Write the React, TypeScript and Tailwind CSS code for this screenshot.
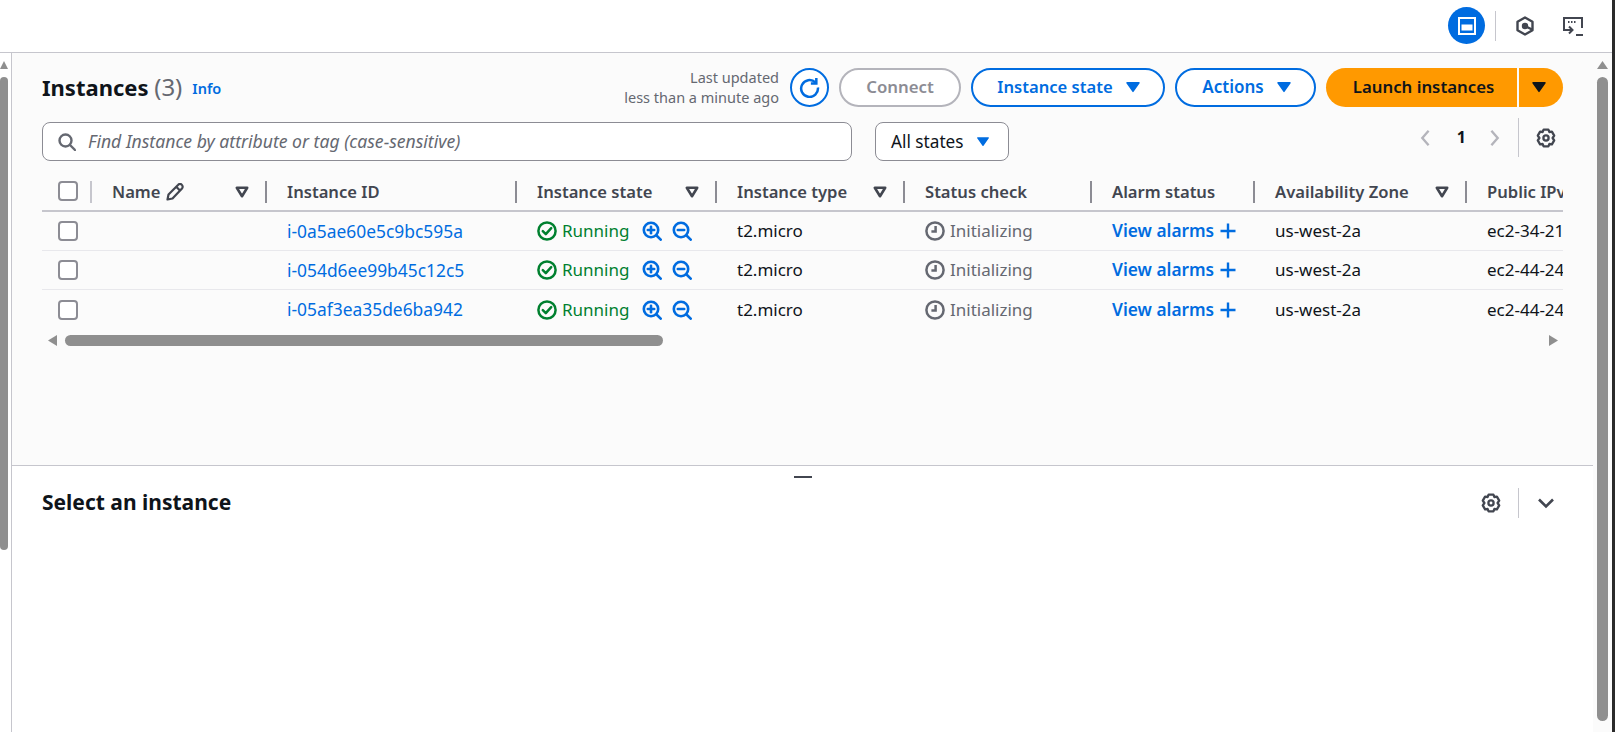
const FONT = "font-['Noto_Sans','Open_Sans',sans-serif]";

const COLS = "grid grid-cols-[50px_175px_250px_200px_188px_187px_163px_212px_200px]";

function Caret({ className }: { className?: string }) {
  return (
    <svg viewBox="0 0 16 12" className={className} fill="currentColor">
      <path d="M2 1h12a.8.8 0 0 1 .6 1.3L8.6 10.8a.8.8 0 0 1-1.2 0L1.4 2.3A.8.8 0 0 1 2 1z" />
    </svg>
  );
}

function SortIcon() {
  return (
    <svg viewBox="0 0 14 12" className="h-[12px] w-[14px] text-[#424650]" fill="none" stroke="currentColor" strokeWidth="2.6" strokeLinejoin="round">
      <path d="M1.8 1.8h10.4L7 10.2z" />
    </svg>
  );
}

function GearIcon() {
  return (
    <svg viewBox="0 0 20 20" className="size-5 text-[#424650]" fill="none" stroke="currentColor" strokeWidth="2.3" strokeLinejoin="round">
      <circle cx="10" cy="10" r="2.6" />
      <path d="M7.6 1.6h4.8l1 2.4 2.5-.4 2.3 4-1.6 2.4 1.6 2.4-2.3 4-2.5-.4-1 2.4H7.6l-1-2.4-2.5.4-2.3-4 1.6-2.4-1.6-2.4 2.3-4 2.5.4z" />
    </svg>
  );
}

function Checkbox() {
  return <span className="block size-5 rounded-[4px] border-2 border-[#8c8c94] bg-white" />;
}

function Sep({ light }: { light?: boolean }) {
  return <span className={`absolute top-0 right-0 h-[22px] w-0.5 ${light ? "bg-[#c6c6cd]" : "bg-[#8c8c94]"}`} />;
}

function HeaderCell({ label, sort, children }: { label: string; sort?: boolean; children?: React.ReactNode }) {
  return (
    <div className="relative flex h-[22px] items-center pr-[18px] pl-[20px]">
      <span className="whitespace-nowrap text-[16.6px] font-semibold text-[#424650]">{label}</span>
      {children}
      {sort && (
        <span className="ml-auto">
          <SortIcon />
        </span>
      )}
      <Sep />
    </div>
  );
}

function ZoomIcon({ plus }: { plus?: boolean }) {
  return (
    <svg viewBox="0 0 20 20" className="size-5 text-[#006ce0]" fill="none" stroke="currentColor" strokeWidth="2.6" strokeLinecap="round">
      <circle cx="9" cy="9" r="7.2" />
      <path d="M14.5 14.5l4.2 4.2" />
      <path d="M5.8 9h6.4" />
      {plus && <path d="M9 5.8v6.4" />}
    </svg>
  );
}

function Row({ id, dns }: { id: string; dns: string }) {
  return (
    <div className={`${COLS} h-[39px] items-center border-b border-[#e8e8ec] text-[17px] last:border-b-0`}>
      <div className="pl-4">
        <Checkbox />
      </div>
      <div />
      <div className="pl-[20px] text-[17.4px] text-[#006ce0]">{id}</div>
      <div className="flex items-center pl-[20px]">
        <svg viewBox="0 0 20 20" className="size-5 text-[#00802f]" fill="none" stroke="currentColor" strokeWidth="2.5">
          <circle cx="10" cy="10" r="8.6" />
          <path d="M5.8 10.2l3 3 5.4-6" strokeLinecap="round" strokeLinejoin="round" />
        </svg>
        <span className="ml-[5px] text-[#00802f]">Running</span>
        <span className="ml-[13px]">
          <ZoomIcon plus />
        </span>
        <span className="ml-[10px]">
          <ZoomIcon />
        </span>
      </div>
      <div className="pl-[20px] text-[#0f141a]">t2.micro</div>
      <div className="flex items-center pl-[20px] text-[#656871]">
        <svg viewBox="0 0 20 20" className="size-5" fill="none" stroke="currentColor" strokeWidth="2.5">
          <circle cx="10" cy="10" r="8.6" />
          <path d="M10.6 5v5.6H6.4" />
        </svg>
        <span className="ml-[5px]">Initializing</span>
      </div>
      <div className="flex items-center pl-[20px] text-[17.3px] font-semibold text-[#006ce0]">
        View alarms
        <svg viewBox="0 0 16 16" className="ml-[6px] size-4" fill="none" stroke="currentColor" strokeWidth="2.4">
          <path d="M8 0.5v15M0.5 8h15" />
        </svg>
      </div>
      <div className="pl-[20px] text-[#0f141a]">us-west-2a</div>
      <div className="pl-[20px] whitespace-nowrap text-[#0f141a]">{dns}</div>
    </div>
  );
}

function VerticalScrollbar({ width, thumbEnd }: { width: string; thumbEnd: string }) {
  return (
    <div className={`flex flex-col items-stretch pt-2 ${width}`}>
      <div className="h-2 w-full bg-[#8f8f8f] [clip-path:polygon(50%_0,100%_100%,0_100%)]" />
      <div className={`mt-[8px] w-full rounded-[6px] bg-[#8f8f8f] ${thumbEnd}`} />
    </div>
  );
}

export default function App() {
  return (
    <div className={`${FONT} relative flex h-[732px] w-[1615px] flex-col overflow-hidden bg-white`}>
      <header className="flex h-[53px] shrink-0 items-start border-b border-[#c6c6cd] pr-[32px]">
        <div className="ml-auto flex items-center pt-[7px]">
          <span className="flex size-[37px] items-center justify-center rounded-full bg-[#006ce0]">
            <svg viewBox="0 0 18 18" className="size-[18px] text-white" fill="none" stroke="currentColor">
              <rect x="1" y="1" width="16" height="16" strokeWidth="2" />
              <rect x="3.5" y="7.5" width="11" height="6" fill="currentColor" strokeWidth="0" />
            </svg>
          </span>
          <span className="ml-[10px] h-[30px] w-px bg-[#c6c6cd]" />
          <svg viewBox="0 0 20 20" className="ml-[19px] size-5 text-[#424650]" fill="none" stroke="currentColor" strokeWidth="2.4">
            <path d="M10 1.5l7.5 4.2v8.6L10 18.5l-7.5-4.2V5.7z" strokeLinejoin="round" />
            <circle cx="10" cy="10" r="2" fill="currentColor" />
            <path d="M10 10l7 3.5" />
          </svg>
          <svg viewBox="0 0 20 20" className="ml-[28px] size-5 translate-y-px text-[#424650]" fill="none" stroke="currentColor" strokeWidth="2">
            <path d="M5 13H1V1h18v10" />
            <path d="M5 5h8" strokeDasharray="1.5 1.5" />
            <path d="M0 13h9M6 9.5l3.5 3.5L6 16.5" />
            <path d="M13 18h7" />
          </svg>
        </div>
      </header>

      <div className="flex min-h-0 flex-1">
        <div className="flex w-3 shrink-0 border-r border-[#c6c6cd]">
          <VerticalScrollbar width="w-2" thumbEnd="h-[473px]" />
        </div>

        <main className="flex w-[1581px] shrink-0 flex-col">
          <section className="h-[413px] shrink-0 border-b border-[#c6c6cd] bg-[#fbfbfb] pt-[14px] pr-[30px] pl-[30px]">
            <div className="flex items-center">
              <h1 className="text-[22px] font-bold text-[#0f141a]">
                Instances <span className="text-[24px] font-normal text-[#656871]">(3)</span>
              </h1>
              <span className="ml-[10px] pt-1 text-[14.5px] font-semibold text-[#006ce0]">Info</span>
              <div className="ml-auto text-right text-[14.5px] leading-[20px] text-[#656871]">
                <div>Last updated</div>
                <div>less than a minute ago</div>
              </div>
              <span className="ml-[11px] flex size-[39px] items-center justify-center rounded-full border-2 border-[#006ce0] bg-white">
                <svg viewBox="0 0 20 20" className="size-[21px] text-[#006ce0]" fill="none" stroke="currentColor" strokeWidth="2.4">
                  <path d="M15.6 5.2A8 8 0 1 0 18 10" />
                  <path d="M16.5 1v5.2h-5.2" />
                </svg>
              </span>
              <span className="ml-[10px] flex h-[39px] w-[122px] items-center justify-center rounded-full border-2 border-[#b4b4bb] bg-white text-[16.8px] font-semibold text-[#8c8c94]">
                Connect
              </span>
              <span className="ml-[10px] flex h-[39px] w-[194px] items-center justify-center rounded-full border-2 border-[#006ce0] bg-white pl-[2px] text-[16.6px] font-semibold text-[#006ce0]">
                Instance state
                <Caret className="ml-[12px] h-[12px] w-4" />
              </span>
              <span className="ml-[10px] flex h-[39px] w-[141px] items-center justify-center rounded-full border-2 border-[#006ce0] bg-white pl-[3px] text-[17px] font-semibold text-[#006ce0]">
                Actions
                <Caret className="ml-[12px] h-[12px] w-4" />
              </span>
              <span className="ml-[10px] flex h-[39px] w-[191px] items-center justify-center rounded-l-full bg-[#ff9900] pl-1 text-[16.8px] font-semibold text-[#0f141a]">
                Launch instances
              </span>
              <span className="ml-0.5 flex h-[39px] w-[44px] items-center justify-center rounded-r-full bg-[#ff9900] pr-1 text-[#0f141a]">
                <Caret className="h-[12px] w-4" />
              </span>
            </div>

            <div className="mt-[15px] flex items-start">
              <div className="flex h-[39px] w-[810px] items-center rounded-[8px] border border-[#8c8c94] bg-white pl-[15px]">
                <svg viewBox="0 0 18 18" className="size-[18px] text-[#656871]" fill="none" stroke="currentColor" strokeWidth="2.4">
                  <circle cx="7.5" cy="7.5" r="6" />
                  <path d="M12 12l5 5" strokeLinecap="round" />
                </svg>
                <span className="ml-[12px] text-[17.6px] text-[#656871] italic">Find Instance by attribute or tag (case-sensitive)</span>
              </div>
              <div className="ml-[23px] flex h-[39px] w-[134px] items-center rounded-[8px] border border-[#8c8c94] bg-white pl-[15px] text-[17.2px] text-[#0f141a]">
                All states
                <Caret className="ml-[12px] h-[11px] w-[14px] text-[#006ce0]" />
              </div>
              <div className="ml-auto flex h-[39px] -translate-y-1 items-center pr-[7px]">
                <svg viewBox="0 0 12 20" className="h-[18px] w-3 -translate-x-1 text-[#b4b4bb]" fill="none" stroke="currentColor" strokeWidth="2.6">
                  <path d="M10 2L3 10l7 8" />
                </svg>
                <span className="ml-[22px] -translate-y-px text-[16px] font-bold text-[#0f141a]">1</span>
                <svg viewBox="0 0 12 20" className="ml-[23px] h-[18px] w-3 text-[#b4b4bb]" fill="none" stroke="currentColor" strokeWidth="2.6">
                  <path d="M2 2l7 8-7 8" />
                </svg>
                <span className="ml-[17px] h-[39px] w-px bg-[#c6c6cd]" />
                <span className="ml-[17px]">
                  <GearIcon />
                </span>
              </div>
            </div>

            <div className="mt-[20px] overflow-hidden">
              <div className={`${COLS} w-max border-b-2 border-[#c6c6cd] pb-[7px]`}>
                <div className="relative h-[22px] pl-4">
                  <Checkbox />
                  <Sep light />
                </div>
                <HeaderCell label="Name" sort>
                  <svg viewBox="0 0 18 18" className="ml-[5px] size-[18px] text-[#424650]" fill="none" stroke="currentColor" strokeWidth="2.2" strokeLinejoin="round">
                    <path d="M1.5 16.5l1-5L12 2a2.1 2.1 0 0 1 4 3.5l-9.5 10z" />
                    <path d="M10.5 4l3.5 3.5" />
                  </svg>
                </HeaderCell>
                <HeaderCell label="Instance ID" />
                <HeaderCell label="Instance state" sort />
                <HeaderCell label="Instance type" sort />
                <HeaderCell label="Status check" />
                <HeaderCell label="Alarm status" />
                <HeaderCell label="Availability Zone" sort />
                <HeaderCell label="Public IPv4 DNS" sort />
              </div>
              <div className="w-max">
                <Row id="i-0a5ae60e5c9bc595a" dns="ec2-34-219-0-12.us-west-2" />
                <Row id="i-054d6ee99b45c12c5" dns="ec2-44-243-1-78.us-west-2" />
                <Row id="i-05af3ea35de6ba942" dns="ec2-44-244-9-31.us-west-2" />
              </div>
            </div>

            <div className="mt-[6px] flex h-[11px] items-center">
              <span className="ml-[6px] h-[11px] w-[9px] bg-[#8f8f8f] [clip-path:polygon(100%_0,100%_100%,0_50%)]" />
              <span className="ml-[8px] h-[11px] w-[598px] rounded-full bg-[#8f8f8f]" />
              <span className="mr-[5px] ml-auto h-[11px] w-[9px] bg-[#8f8f8f] [clip-path:polygon(0_0,100%_50%,0_100%)]" />
            </div>
          </section>

          <section className="flex-1 pr-[30px] pl-[30px]">
            <div className="flex justify-center pt-[10px]">
              <span className="h-0.5 w-[18px] bg-[#424650]" />
            </div>
            <div className="mt-[10px] flex h-[30px] items-center">
              <h2 className="text-[21px] font-bold text-[#0f141a]">Select an instance</h2>
              <span className="ml-auto">
                <GearIcon />
              </span>
              <span className="ml-[17px] h-[30px] w-px bg-[#c6c6cd]" />
              <svg viewBox="0 0 18 12" className="mr-[8px] ml-[18px] h-3 w-[18px] text-[#424650]" fill="none" stroke="currentColor" strokeWidth="2.6">
                <path d="M2 2.5l7 7 7-7" />
              </svg>
            </div>
          </section>
        </main>

        <div className="flex w-[19px] shrink-0 bg-[#fbfbfb]">
          <div className="ml-1">
            <VerticalScrollbar width="w-[11px]" thumbEnd="h-[644px]" />
          </div>
        </div>
      </div>
      <div className="absolute top-0 right-0 bottom-0 w-[3px] bg-[#2a2a2a]" />
    </div>
  );
}
